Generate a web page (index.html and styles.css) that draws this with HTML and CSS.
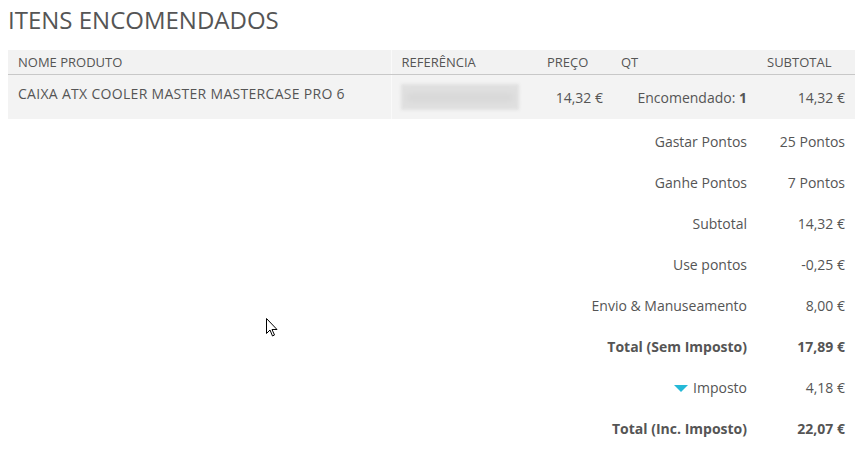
FILE: index.html
```html
<!DOCTYPE html>
<html lang="pt">
<head>
<meta charset="utf-8">
<title>Itens encomendados</title>
<link rel="stylesheet" href="styles.css">
</head>
<body>
<h2 class="title">ITENS ENCOMENDADOS</h2>
<table class="items">
  <colgroup>
    <col class="w-name"><col class="w-ref"><col class="w-price"><col class="w-qty"><col class="w-sub">
  </colgroup>
  <thead>
    <tr>
      <th class="c-name">NOME PRODUTO</th>
      <th class="c-ref">REFERÊNCIA</th>
      <th class="c-price">PREÇO</th>
      <th class="c-qty">QT</th>
      <th class="c-sub">SUBTOTAL</th>
    </tr>
  </thead>
  <tbody>
    <tr>
      <td class="c-name prod">CAIXA ATX COOLER MASTER MASTERCASE PRO 6</td>
      <td class="c-ref"><div class="blur"></div></td>
      <td class="c-price num">14,32 €</td>
      <td class="c-qty num">Encomendado: <b>1</b></td>
      <td class="c-sub num">14,32 €</td>
    </tr>
  </tbody>
</table>
<table class="totals">
  <tr><td class="lbl">Gastar Pontos</td><td class="val">25 Pontos</td></tr>
  <tr><td class="lbl">Ganhe Pontos</td><td class="val">7 Pontos</td></tr>
  <tr><td class="lbl">Subtotal</td><td class="val">14,32 €</td></tr>
  <tr><td class="lbl">Use pontos</td><td class="val">-0,25 €</td></tr>
  <tr><td class="lbl">Envio &amp; Manuseamento</td><td class="val">8,00 €</td></tr>
  <tr class="strong"><td class="lbl">Total (Sem Imposto)</td><td class="val">17,89 €</td></tr>
  <tr><td class="lbl"><span class="caret"></span>Imposto</td><td class="val">4,18 €</td></tr>
  <tr class="strong"><td class="lbl">Total (Inc. Imposto)</td><td class="val">22,07 €</td></tr>
</table>
<svg class="cursor" width="12" height="19" viewBox="0 0 12 19"><path d="M0.5 0.5 L0.5 15.5 L4 12 L6.5 18 L8.5 17 L6 11.5 L11 11.5 Z" fill="#fff" stroke="#000" stroke-width="1"/></svg>
</body>
</html>
```

FILE: styles.css
```css
html, body { margin: 0; padding: 0; background: #fff; }
body {
  padding: 8px;
  font-family: "Open Sans", "Liberation Sans", sans-serif;
  color: #555;
  position: relative;
  height: 452px;
  box-sizing: border-box;
}
.title {
  margin: 0;
  font-size: 24px;
  font-weight: 400;
  line-height: 24px;
  color: #555;
}
.items {
  margin-top: 18px;
  width: 847px;
  border-collapse: collapse;
  table-layout: fixed;
}
.w-name { width: 383px; }
.w-ref { width: 146px; }
.w-price { width: 74px; }
.w-qty { width: 146px; }
.w-sub { width: 98px; }
.items th {
  background: #f2f2f2;
  font-size: 13px;
  font-weight: 400;
  text-align: left;
  height: 24px;
  padding: 0 10px;
  border-bottom: 1px solid #c8c8c8;
  color: #555;
}
.items td {
  background: #f3f3f3;
  height: 44px;
  font-size: 14px;
  line-height: 19px;
  padding: 0 10px;
}
.items .c-ref { border-left: 1px solid #fafafa; }
.items td.num { text-align: right; }
.items td.c-price { padding-right: 8px; }
.items td.c-ref { padding-left: 9px; }
.items td.prod {
  font-size: 14px;
  letter-spacing: 0.3px;
  vertical-align: top;
  height: 35px;
  padding-top: 9px;
}
.num b { font-weight: 700; }
.blur {
  width: 118px;
  height: 26px;
  background: #e0e0e0;
  filter: blur(1.5px);
  position: relative;
}
.blur::after {
  content: "";
  position: absolute;
  left: 6px; right: 6px; top: 10px; height: 7px;
  background: #d5d5d5;
  filter: blur(3px);
}
.totals {
  width: 847px;
  margin-top: 2px;
  border-collapse: collapse;
}
.totals td {
  height: 41px;
  font-size: 14px;
  padding: 0;
  text-align: right;
}
.totals .lbl { padding-right: 10px; }
.totals .val { width: 88px; padding-right: 10px; }
.totals .strong td { font-weight: 700; }
.caret {
  display: inline-block;
  width: 0; height: 0;
  border-left: 7px solid transparent;
  border-right: 7px solid transparent;
  border-top: 7px solid #25b9d7;
  margin-right: 5px;
  vertical-align: 1px;
}
.cursor {
  position: absolute;
  left: 266px;
  top: 318px;
}
```
